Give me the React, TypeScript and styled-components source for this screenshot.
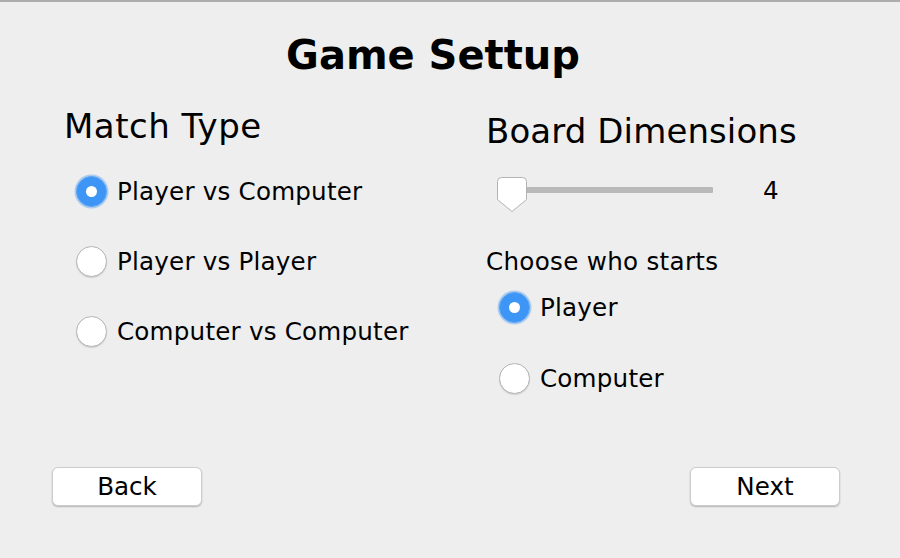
import React from "react";
import styled, { createGlobalStyle } from "styled-components";

const GlobalStyle = createGlobalStyle`
  html, body { margin: 0; padding: 0; background: #eeeeee; }
  * { box-sizing: border-box; }
`;

const Page = styled.div`
  width: 900px;
  height: 558px;
  background: #eeeeee;
  border-top: 2px solid #adadad;
  display: flex;
  flex-direction: column;
  font-family: "DejaVu Sans", "Liberation Sans", sans-serif;
  color: #111;
`;

const Title = styled.h1`
  margin: 33px 0 0 0;
  padding-right: 34px;
  text-align: center;
  font-size: 40px;
  line-height: 40px;
  font-weight: bold;
  color: #000;
`;

const Columns = styled.div`
  display: flex;
  margin-top: 34px;
`;

const Column = styled.div<{ $left: number; $width: number; $top?: number }>`
  display: flex;
  flex-direction: column;
  margin-left: ${(p) => p.$left}px;
  width: ${(p) => p.$width}px;
  padding-top: ${(p) => p.$top ?? 0}px;
`;

const Heading = styled.h2<{ $spacing: number }>`
  margin: 0;
  font-size: 34px;
  line-height: 34px;
  font-weight: normal;
  letter-spacing: ${(p) => p.$spacing}px;
  color: #000;
`;

const RadioList = styled.div<{ $indent: number; $top: number; $gap: number }>`
  display: flex;
  flex-direction: column;
  gap: ${(p) => p.$gap}px;
  padding-left: ${(p) => p.$indent}px;
  margin-top: ${(p) => p.$top}px;
`;

const RadioRow = styled.label`
  display: flex;
  align-items: center;
  gap: 10px;
  height: 31px;
  font-size: 24.6px;
  line-height: 31px;
  letter-spacing: 0.2px;
  color: #000;
`;

const Circle = styled.span<{ $checked: boolean }>`
  width: 31px;
  height: 31px;
  border-radius: 50%;
  flex: none;
  display: flex;
  align-items: center;
  justify-content: center;
  background: ${(p) => (p.$checked ? "#3d96f6" : "#ffffff")};
  border: 1px solid ${(p) => (p.$checked ? "#5aa5f5" : "#b4b4b4")};
  box-shadow: ${(p) =>
    p.$checked
      ? "0 0 0 1.5px rgba(120, 175, 240, 0.55)"
      : "0 1px 1px rgba(0, 0, 0, 0.12)"};
`;

const Dot = styled.span`
  width: 11px;
  height: 11px;
  border-radius: 50%;
  background: #ffffff;
`;

const SliderRow = styled.div`
  display: flex;
  align-items: flex-start;
  height: 35px;
  margin-top: 28px;
  padding-left: 10px;
  gap: 50px;
`;

const Slider = styled.div`
  position: relative;
  width: 217px;
  height: 35px;
`;

const Track = styled.div`
  margin: 11px 0 0 15px;
  height: 6px;
  background: #b9b9b9;
  border-radius: 1px;
`;

const Thumb = styled.svg`
  position: absolute;
  left: 0;
  top: 0;
`;

const Value = styled.span`
  font-size: 24.6px;
  line-height: 30px;
  color: #000;
`;

const SubLabel = styled.div`
  margin-top: 36px;
  font-size: 24.6px;
  line-height: 30px;
  letter-spacing: 0.3px;
  color: #000;
`;

const Footer = styled.div`
  margin-top: auto;
  display: flex;
  justify-content: space-between;
  padding: 0 60px 52px 52px;
`;

const Button = styled.button`
  width: 150px;
  height: 39px;
  background: #ffffff;
  border: 1px solid #cdcdcd;
  border-radius: 6px;
  box-shadow: 0 1px 1.5px rgba(0, 0, 0, 0.25);
  font-family: "DejaVu Sans", "Liberation Sans", sans-serif;
  font-size: 24.6px;
  line-height: 37px;
  color: #000;
  padding: 0;
`;

function Radio({ label, checked }: { label: string; checked?: boolean }) {
  return (
    <RadioRow>
      <Circle $checked={!!checked}>{checked && <Dot />}</Circle>
      <span>{label}</span>
    </RadioRow>
  );
}

export default function App() {
  return (
    <>
      <GlobalStyle />
      <Page>
        <Title>Game Settup</Title>
        <Columns>
          <Column $left={64} $width={360}>
            <Heading $spacing={0.5}>Match Type</Heading>
            <RadioList $indent={12} $top={33} $gap={39}>
              <Radio label="Player vs Computer" checked />
              <Radio label="Player vs Player" />
              <Radio label="Computer vs Computer" />
            </RadioList>
          </Column>
          <Column $left={62} $width={380} $top={5}>
            <Heading $spacing={0.1}>Board Dimensions</Heading>
            <SliderRow>
              <Slider>
                <Track />
                <Thumb width="32" height="37" viewBox="0 0 32 37">
                  <path
                    d="M1.5 5.5 Q1.5 1.5 5.5 1.5 L26.5 1.5 Q30.5 1.5 30.5 5.5 L30.5 23.5 L16 35.5 L1.5 23.5 Z"
                    fill="#ffffff"
                    stroke="#b3b3b3"
                    strokeWidth="1"
                  />
                </Thumb>
              </Slider>
              <Value>4</Value>
            </SliderRow>
            <SubLabel>Choose who starts</SubLabel>
            <RadioList $indent={13} $top={15} $gap={40}>
              <Radio label="Player" checked />
              <Radio label="Computer" />
            </RadioList>
          </Column>
        </Columns>
        <Footer>
          <Button>Back</Button>
          <Button>Next</Button>
        </Footer>
      </Page>
    </>
  );
}
